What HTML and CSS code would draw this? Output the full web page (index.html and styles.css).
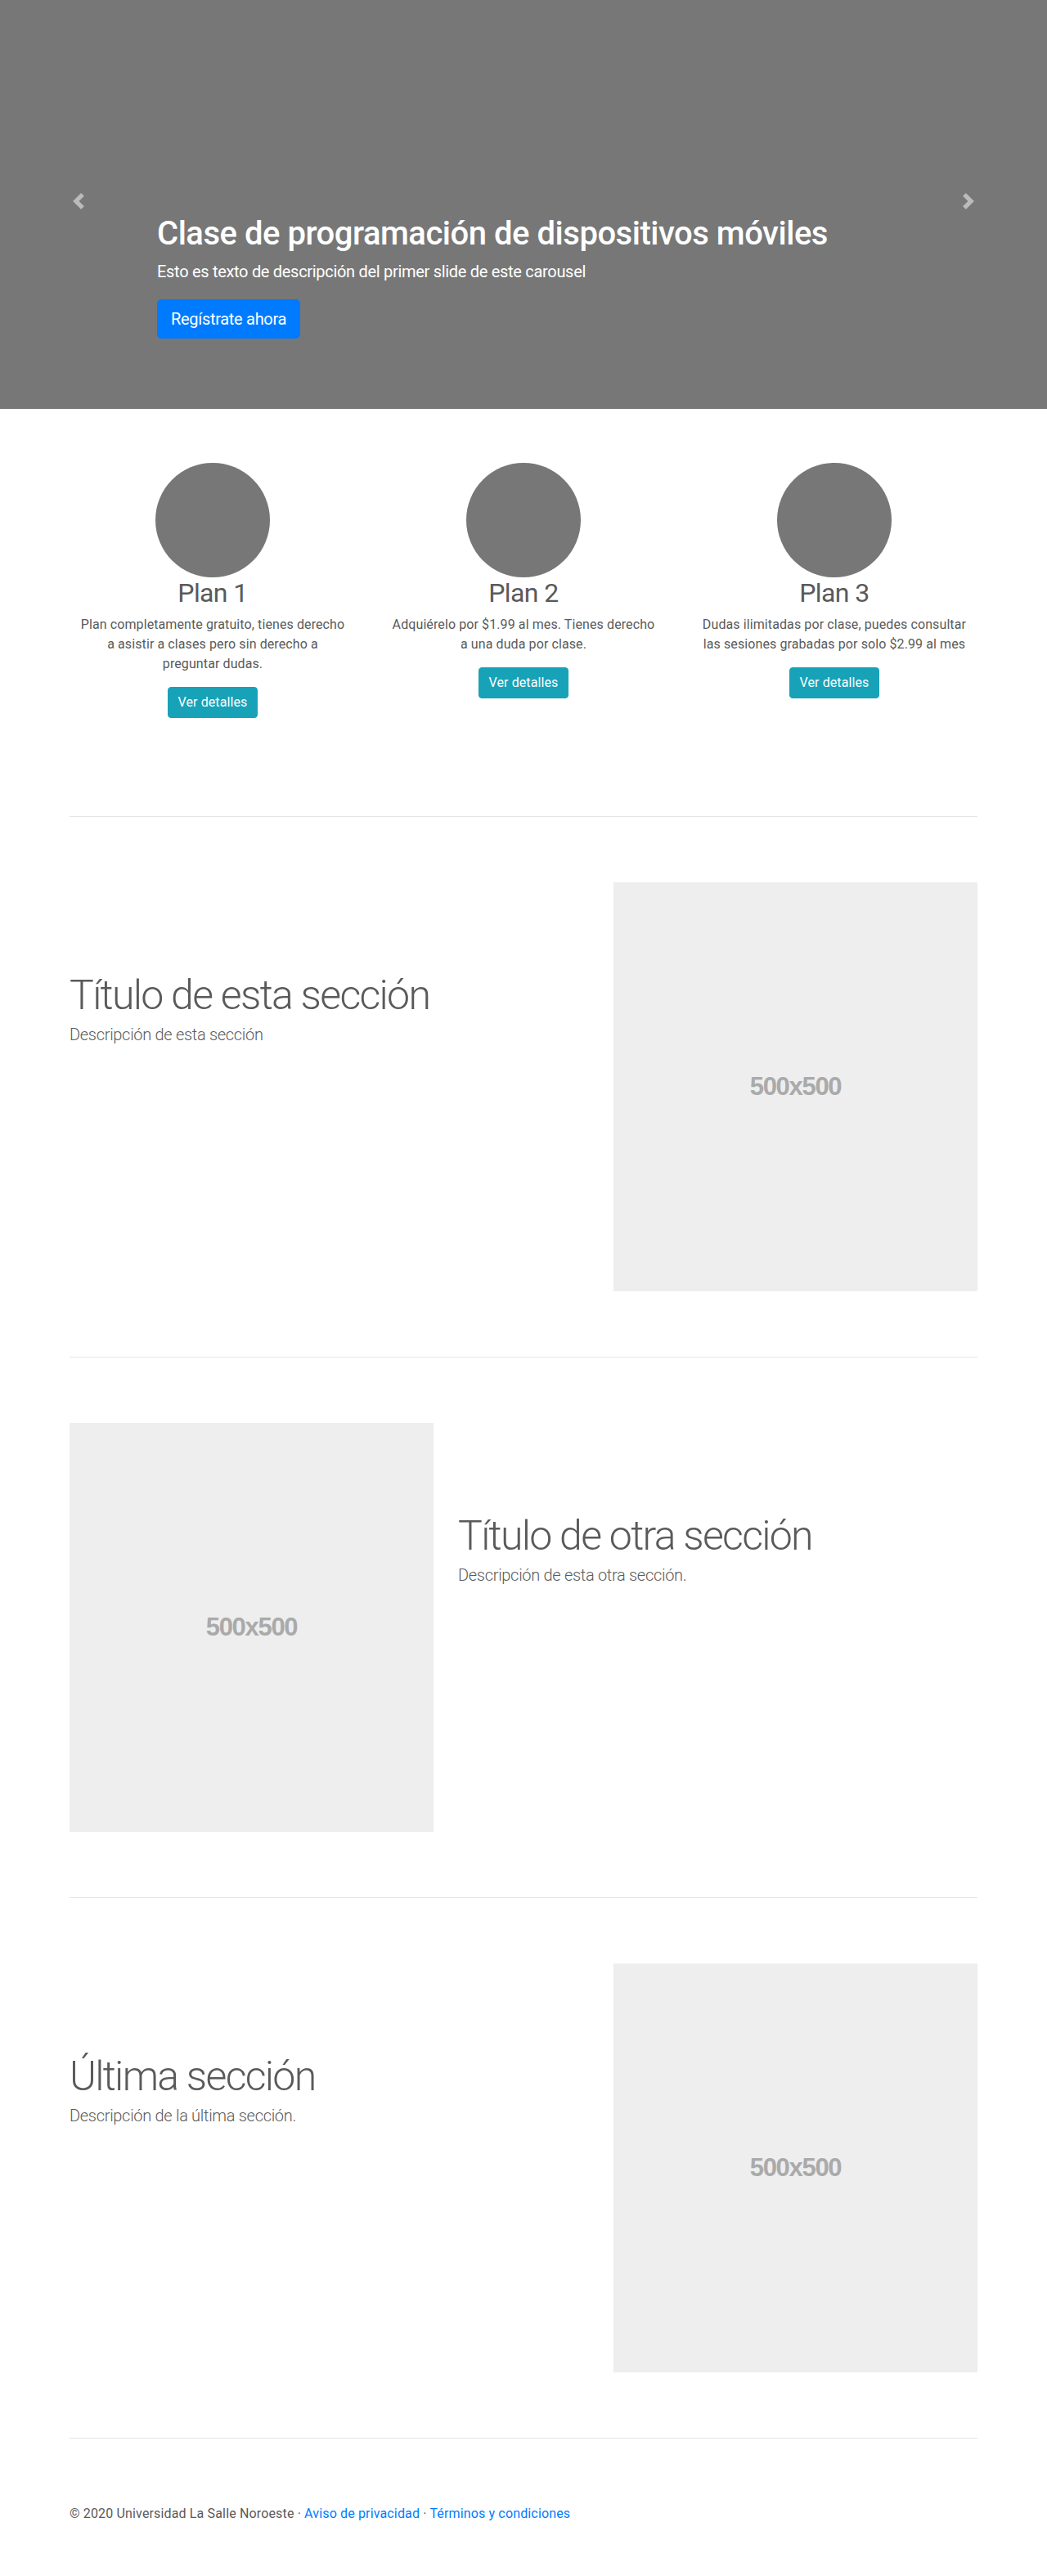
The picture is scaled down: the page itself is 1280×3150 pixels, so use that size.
FILE: index.html
```html
<!DOCTYPE html>
<html lang="es">
<head>
<meta charset="utf-8">
<title>Carousel</title>
<link rel="stylesheet" href="styles.css">
</head>
<body>
<main>
  <div class="carousel">
    <a class="control" href="#" aria-label="Anterior">
      <svg class="control-icon" viewBox="0 0 8 8" width="20" height="20"><path d="M5.25 0l-4 4 4 4 1.5-1.5L4.25 4l2.5-2.5L5.25 0z" fill="#fff"/></svg>
    </a>
    <div class="caption">
      <h1 class="caption-title">Clase de programación de dispositivos móviles</h1>
      <p class="caption-text">Esto es texto de descripción del primer slide de este carousel</p>
      <p class="caption-cta"><a class="btn btn-primary btn-lg" href="#">Regístrate ahora</a></p>
    </div>
    <a class="control" href="#" aria-label="Siguiente">
      <svg class="control-icon" viewBox="0 0 8 8" width="20" height="20"><path d="M2.75 0l-1.5 1.5L3.75 4l-2.5 2.5L2.75 8l4-4-4-4z" fill="#fff"/></svg>
    </a>
  </div>

  <div class="container marketing">
    <div class="row">
      <div class="plan">
        <div class="plan-img"></div>
        <h2 class="plan-title">Plan 1</h2>
        <p class="plan-text">Plan completamente gratuito, tienes derecho a asistir a clases pero sin derecho a preguntar dudas.</p>
        <p class="plan-cta"><a class="btn btn-info" href="#">Ver detalles</a></p>
      </div>
      <div class="plan">
        <div class="plan-img"></div>
        <h2 class="plan-title">Plan 2</h2>
        <p class="plan-text">Adquiérelo por $1.99 al mes. Tienes derecho a una duda por clase.</p>
        <p class="plan-cta"><a class="btn btn-info" href="#">Ver detalles</a></p>
      </div>
      <div class="plan">
        <div class="plan-img"></div>
        <h2 class="plan-title">Plan 3</h2>
        <p class="plan-text">Dudas ilimitadas por clase, puedes consultar las sesiones grabadas por solo $2.99 al mes</p>
        <p class="plan-cta"><a class="btn btn-info" href="#">Ver detalles</a></p>
      </div>
    </div>

    <hr class="divider">

    <div class="row featurette">
      <div class="col-7">
        <h2 class="featurette-heading">Título de esta sección</h2>
        <p class="lead">Descripción de esta sección</p>
      </div>
      <div class="col-5">
        <div class="placeholder"><span>500x500</span></div>
      </div>
    </div>

    <hr class="divider">

    <div class="row featurette">
      <div class="col-5">
        <div class="placeholder"><span>500x500</span></div>
      </div>
      <div class="col-7">
        <h2 class="featurette-heading">Título de otra sección</h2>
        <p class="lead">Descripción de esta otra sección.</p>
      </div>
    </div>

    <hr class="divider">

    <div class="row featurette">
      <div class="col-7">
        <h2 class="featurette-heading">Última sección</h2>
        <p class="lead">Descripción de la última sección.</p>
      </div>
      <div class="col-5">
        <div class="placeholder"><span>500x500</span></div>
      </div>
    </div>

    <hr class="divider">
  </div>

  <footer class="container footer">
    <p class="footer-text">© 2020 Universidad La Salle Noroeste · <a href="#">Aviso de privacidad</a> · <a href="#">Términos y condiciones</a></p>
  </footer>
</main>
</body>
</html>
```

FILE: styles.css
```css
* { box-sizing: border-box; }

html, body {
  margin: 0;
  padding: 0;
}

body {
  font-family: Roboto, "Liberation Sans", Arial, sans-serif;
  font-size: 16px;
  line-height: 1.5;
  color: #5a5a5a;
  background: #fff;
  letter-spacing: 0.1px;
}

a { color: #007bff; text-decoration: none; }

/* Carousel */
.carousel {
  height: 500px;
  background: #777;
  display: grid;
  grid-template-columns: 15% 1fr 15%;
}

.control {
  display: flex;
  align-items: center;
  justify-content: center;
  opacity: .5;
  padding-bottom: 8px;
}

.control-icon { display: block; }

.caption {
  align-self: end;
  color: #fff;
  padding-bottom: 86px;
}

.caption-title {
  margin: 0 0 7px;
  font-size: 40px;
  font-weight: 500;
  line-height: 1.2;
  letter-spacing: -0.48px;
}

.caption-text {
  margin: 0 0 19px;
  font-size: 20px;
  line-height: 1.5;
  letter-spacing: -0.3px;
}

.caption-cta {
  margin: 0;
  display: flex;
}

.btn {
  display: inline-block;
  border: 1px solid transparent;
  border-radius: 4px;
  font-weight: 400;
  color: #fff;
  text-align: center;
}

.btn-primary { background: #007bff; border-color: #007bff; }

.btn-lg {
  padding: 8px 16px;
  font-size: 20px;
  line-height: 30px;
  border-radius: 5px;
  letter-spacing: -0.3px;
}

.btn-info {
  background: #17a2b8;
  border-color: #17a2b8;
  padding: 6px 12px;
  font-size: 16px;
  line-height: 24px;
}

/* Marketing */
.container {
  max-width: 1140px;
  margin: 0 auto;
  padding: 0 15px;
}

.marketing { margin-top: 66px; }

.row {
  display: flex;
  margin: 0 -15px;
}

.plan {
  flex: 0 0 33.3333%;
  padding: 0 15px;
  text-align: center;
  margin-bottom: 24px;
}

.plan-img {
  width: 140px;
  height: 140px;
  border-radius: 50%;
  background: #777;
  margin: 0 auto;
}

.plan-title {
  margin: 0 0 8px;
  font-size: 32px;
  font-weight: 400;
  line-height: 1.2;
  letter-spacing: -0.6px;
}

.plan-text {
  margin: 0 12px 16px;
}

.plan-cta { margin: 0 0 16px; }

.divider {
  margin: 80px 0;
  border: 0;
  height: 0;
  border-top: 1px solid rgba(0, 0, 0, .1);
}

/* Featurettes */
.col-7 {
  flex: 0 0 58.3333%;
  padding: 0 15px;
}

.col-5 {
  flex: 0 0 41.6667%;
  padding: 0 15px;
}

.featurette-heading {
  margin: 113px 0 8px;
  font-size: 50px;
  font-weight: 300;
  line-height: 1;
  letter-spacing: -1.7px;
}

.lead {
  margin: 0 0 16px;
  font-size: 20px;
  font-weight: 300;
  line-height: 1.5;
  letter-spacing: -0.3px;
}

.placeholder {
  height: 500px;
  background: #eee;
  display: flex;
  align-items: center;
  justify-content: center;
}

.placeholder span {
  font-family: "Liberation Sans", Arial, sans-serif;
  font-weight: 700;
  font-size: 31px;
  letter-spacing: -1.3px;
  color: #aaa;
}

/* Footer */
.footer-text {
  margin: 0 0 16px;
  letter-spacing: 0.15px;
}
```
